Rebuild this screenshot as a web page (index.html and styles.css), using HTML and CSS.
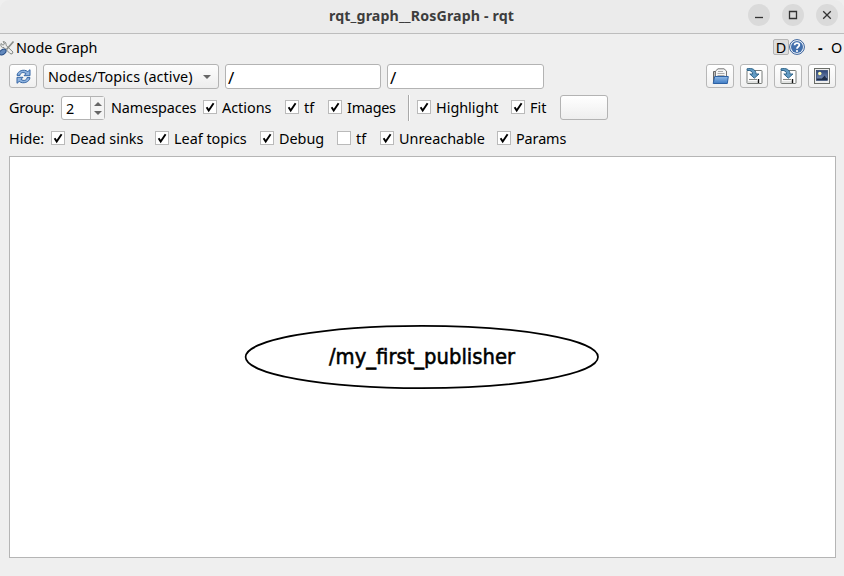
FILE: index.html
```html
<!DOCTYPE html>
<html lang="en">
<head>
<meta charset="utf-8">
<title>rqt_graph__RosGraph - rqt</title>
<link rel="stylesheet" href="styles.css">
</head>
<body>
<svg width="0" height="0" class="defs">
  <defs>
    <linearGradient id="blue" x1="0" y1="0" x2="0" y2="1"><stop offset="0" stop-color="#8fb9e6"/><stop offset="1" stop-color="#3f7cc4"/></linearGradient>
    <linearGradient id="sky" x1="0" y1="0" x2="0" y2="1"><stop offset="0" stop-color="#2c4478"/><stop offset="1" stop-color="#8399bd"/></linearGradient>
    <symbol id="tick" viewBox="0 0 14 14"><path d="M3.6 7.2 5.7 10.6 10.6 3.2" fill="none" stroke="#000" stroke-width="1.9"/></symbol>
    <symbol id="save" viewBox="0 0 17 17">
      <rect x="1" y="2.5" width="15" height="13" rx=".6" fill="#fff" stroke="#777b78"/>
      <path d="M3 11.5h8" stroke="#858985" stroke-width="1.1"/><path d="M2 14h10" stroke="#c4c7c4"/><path d="M12.5 11v4" stroke="#111" stroke-width="1.4"/>
      <path d="M1 .8C6-.3 10 1.5 10 6h3L8.3 10.2 3.8 6h2.8C6.6 3.3 4.6 2.2 1 2.4z" fill="#639bc3" stroke="#285f83" stroke-width=".9"/>
    </symbol>
  </defs>
</svg>
<header class="titlebar">
  <h1>rqt_graph__RosGraph - rqt</h1>
  <div class="controls">
    <span><svg viewBox="0 0 22 22"><path d="M7 13.5h8"/></svg></span>
    <span><svg viewBox="0 0 22 22"><path d="M7.5 7.5h7v7h-7z"/></svg></span>
    <span><svg viewBox="0 0 22 22"><path d="m7.2 7.2 7.6 7.6m0-7.6-7.6 7.6"/></svg></span>
  </div>
</header>
<div class="dock">
  <svg class="tools" viewBox="0 0 15 16"><path d="M1 3.5 3 5.2 4.5 4 3.2 1.5C6 1.7 6.3 4 6 5.3L13 12l-1 2-2-.5-6-6C1.5 8 .3 6 1 3.5z" fill="#eee" stroke="#858985"/><path d="m13.5 1.5-7 8" stroke="#898d89" stroke-width="1.7"/><ellipse cx="2.8" cy="12" rx="3.6" ry="2.4" transform="rotate(-38 2.8 12)" fill="#6288bc" stroke="#244b83"/></svg>
  <span class="t-node">Node Graph</span>
  <span class="dbtn">D</span>
  <svg class="help" viewBox="0 0 16 16"><circle cx="8" cy="8" r="7.4" fill="#f4f7fb" stroke="#365f99"/><circle cx="8" cy="8" r="6" fill="#426fac"/><path d="M5.6 6.2C5.7 3.5 10.3 3.5 10.3 6 10.3 7.7 8 7.7 8 9.7" fill="none" stroke="#fff" stroke-width="1.8"/><circle cx="8" cy="12" r="1.1" fill="#fff"/></svg>
  <span class="dash">-</span><span class="circle">O</span>
</div>
<div class="toolbar">
  <button class="tool" aria-label="Refresh"><svg viewBox="0 0 17 17"><path d="M2 7.4C2.4 2.8 9 .6 12.8 3.6L15 1.7v6H9l2-2C8.5 3.7 5.3 4.4 5 7.4z" fill="#8fb3df" stroke="#3465a4"/><path d="M15 9.6c-.4 4.6-7 6.8-10.8 3.8L2 15.3v-6h6l-2 2c2.5 2 5.7 1.3 6-1.7z" fill="#8fb3df" stroke="#3465a4"/></svg></button>
  <div class="combo"><span class="t-combo">Nodes/Topics (active)</span><i class="down"></i></div>
  <div class="field">/</div>
  <div class="field second">/</div>
  <div class="actions">
    <button class="tool" aria-label="Open"><svg viewBox="0 0 17 17"><path d="M1.5 14V3.5h5l1 1" fill="#bbb" stroke="#666"/><path d="M3.5 10V3L6 .8h6L14.5 3v8z" fill="#f5f5f5" stroke="#777"/><path d="M6 3.5h5M5.5 5.5h7M5.5 7.5h7" stroke="#aaa"/><path d="M2.7 8.5h13.6l-1 7H1.2z" fill="url(#blue)" stroke="#2d61a3"/></svg></button>
    <button class="tool" aria-label="Save"><svg><use href="#save"/></svg></button>
    <button class="tool" aria-label="Save as"><svg><use href="#save"/></svg></button>
    <button class="tool" aria-label="Image"><svg viewBox="0 0 17 17"><rect x=".5" y=".5" width="15" height="15" fill="#eee" stroke="#6b6e69"/><rect x="2.5" y="2.5" width="11" height="10" fill="url(#sky)" stroke="#263c66" stroke-width=".7"/><circle cx="5.8" cy="5.5" r="1.7" fill="#fffdb0"/><path d="M2.8 10.6h5l3-3 1 2 1.5 1V12H2.8z" fill="#1d2d49"/></svg></button>
  </div>
</div>
<div class="options">
  <span class="t-group">Group:</span>
  <div class="spin"><span>2</span><div class="arrows"><i class="up"></i><i class="down"></i></div></div>
  <span class="t-ns">Namespaces</span>
  <b class="box"><svg><use href="#tick"/></svg></b><span class="t-act">Actions</span>
  <b class="box"><svg><use href="#tick"/></svg></b><span class="t-tf">tf</span>
  <b class="box"><svg><use href="#tick"/></svg></b><span class="t-img">Images</span>
  <i class="sep"></i>
  <b class="box"><svg><use href="#tick"/></svg></b><span class="t-high">Highlight</span>
  <b class="box"><svg><use href="#tick"/></svg></b><span class="t-fit">Fit</span>
  <button class="blank" aria-label="Fit in view"></button>
</div>
<div class="options hide">
  <span class="t-hide">Hide:</span>
  <b class="box"><svg><use href="#tick"/></svg></b><span class="t-dead">Dead sinks</span>
  <b class="box"><svg><use href="#tick"/></svg></b><span class="t-leaf">Leaf topics</span>
  <b class="box"><svg><use href="#tick"/></svg></b><span class="t-debug">Debug</span>
  <b class="box"></b><span class="t-tf2">tf</span>
  <b class="box"><svg><use href="#tick"/></svg></b><span class="t-un">Unreachable</span>
  <b class="box"><svg><use href="#tick"/></svg></b><span class="t-par">Params</span>
</div>
<main class="canvas">
  <svg viewBox="0 0 825 400"><ellipse cx="411.8" cy="200" rx="176.2" ry="31.2" fill="none" stroke="#000" stroke-width="1.7"/><text x="319" y="207.2" textLength="186" lengthAdjust="spacingAndGlyphs">/my_first_publisher</text></svg>
</main>
</body>
</html>
```
FILE: styles.css
```css
* { box-sizing: border-box; }
body { margin: 0; width: 844px; height: 576px; overflow: hidden; background: #efefef; color: #000; font: 14.4px/20px "Noto Sans", "Open Sans", sans-serif; white-space: nowrap; }
svg { display: block; }
.defs { position: absolute; }
button { padding: 0; font: inherit; }
.titlebar { height: 34px; background: #ebebeb; border-bottom: 1px solid #bdbdbd; border-radius: 9px 9px 0 0; display: grid; grid-template-columns: 329px 1fr 96px; }
.titlebar h1 { grid-column: 2; margin: 6px 0 0; font-size: 14.2px; line-height: 20px; letter-spacing: .13px; color: #3d3d3d; }
.controls { display: flex; gap: 12px; padding-top: 4px; }
.controls span { width: 22px; height: 22px; border-radius: 50%; background: #dadada; }
.controls path { fill: none; stroke: #333; stroke-width: 1.3; }
.dock { height: 29px; padding-bottom: 2px; display: flex; align-items: center; }
.tools { width: 15px; height: 16px; margin-right: 1px; }
.t-node { width: 757px; letter-spacing: -.1px; }
.dbtn { width: 16px; height: 16px; margin-bottom: 2px; border: 1px solid #b5b5b5; border-radius: 2px; background: #dedede; text-align: center; line-height: 15px; flex: none; }
.help { width: 16px; height: 16px; margin-bottom: 2px; flex: none; }
.dash { margin-left: 13px; width: 13px; font-weight: 700; flex: none; }
.circle { flex: none; }
.toolbar { height: 27px; padding: 1px 8px 0 9px; display: flex; align-items: flex-start; }
.tool { width: 28px; height: 24px; display: grid; place-items: center; border: 1px solid #b7b7b7; border-radius: 3px; background: linear-gradient(#fff, #f0f0f0); }
.tool svg { width: 17px; height: 17px; }
.combo { width: 176px; height: 25px; margin-left: 6px; border: 1px solid #b3b3b3; border-radius: 3px; background: linear-gradient(#fdfdfd, #ededed); display: flex; align-items: center; padding-left: 4px; }
.t-combo { width: 155px; letter-spacing: .1px; }
.down, .up { width: 0; height: 0; border: 4px solid transparent; border-bottom-width: 0; border-top-color: #666; }
.up { border-width: 0 4px 4px; border-bottom-color: #666; }
.field { width: 156px; height: 25px; margin-left: 6px; border: 1px solid #b3b3b3; border-radius: 3px; background: #fff; padding: 2px 2px; font-size: 17px; line-height: 22px; }
.second { width: 157px; }
.actions { margin-left: auto; display: flex; gap: 6px; }
.options { height: 35px; padding-left: 9px; display: flex; align-items: center; }
.options > * { flex: none; }
.spin { width: 44px; height: 24px; margin-top: 1px; border: 1px solid #b3b3b3; border-radius: 3px; background: #fff; display: flex; }
.spin > span { width: 28px; padding-left: 4px; line-height: 24px; }
.arrows { flex: 1; border-left: 1px solid #bbb; background: #f4f4f4; display: flex; flex-direction: column; align-items: center; justify-content: center; gap: 5px; }
.box { width: 14px; height: 14px; margin-bottom: 1px; border: 1px solid #bababa; background: #fff; }
.box svg { width: 14px; height: 14px; margin: -1px; }
.sep { width: 2px; height: 26px; background: #a9a9a9; border-right: 1px solid #fff; margin-right: 7px; }
.blank { width: 48px; height: 25px; border: 1px solid #b3b3b3; border-radius: 3px; background: linear-gradient(#fff, #eee); }
.hide { height: 31px; padding-bottom: 4px; }
.t-group { width: 52px; letter-spacing: -.2px; }
.t-ns { width: 92px; margin-left: 6px; letter-spacing: -.1px; }
.t-act { width: 63px; }
.t-tf { width: 24px; }
.t-tf2 { width: 24px; }
.t-img { width: 61px; letter-spacing: -.25px; }
.t-high { width: 75px; }
.t-fit { width: 30px; }
.t-hide { width: 42px; }
.t-dead { width: 85px; }
.t-leaf { width: 86px; }
.t-debug { width: 58px; }
.t-un { width: 98px; }
.t-par { letter-spacing: -.1px; }
.box + span { margin-left: 5px; }
.canvas { width: 827px; height: 402px; margin-left: 9px; border: 1px solid #b5b5b5; background: #fff; }
.canvas text { font: 21.5px "DejaVu Sans", sans-serif; stroke: #000; stroke-width: .6px; }
```
